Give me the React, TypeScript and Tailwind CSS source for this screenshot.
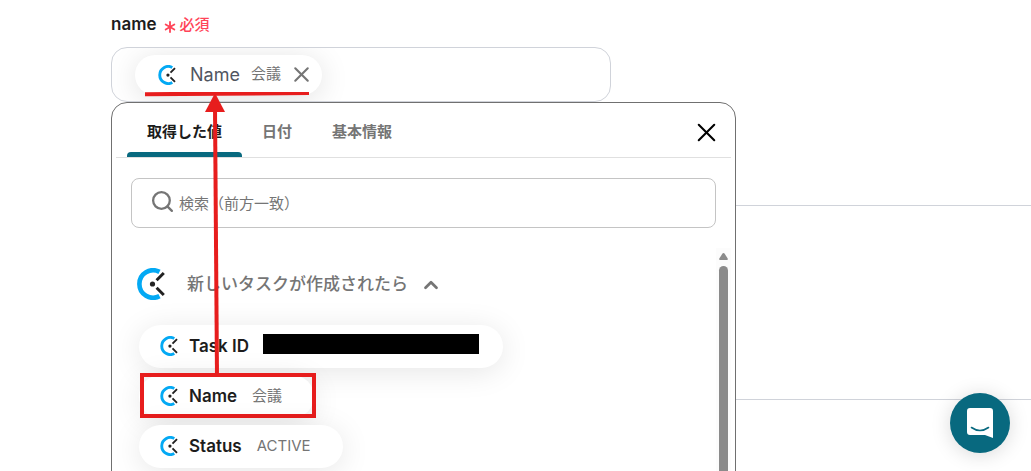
import { Asterisk, ChevronUp, Search, X } from 'lucide-react';

const tabs = [
  { label: '取得した値', active: true },
  { label: '日付', active: false },
  { label: '基本情報', active: false },
];

const values = [
  { name: 'Task ID', value: '', masked: true },
  { name: 'Name', value: '会議', highlighted: true },
  { name: 'Status', value: 'ACTIVE' },
];

function ClockLogo({ className }: { className: string }) {
  return (
    <svg viewBox="0 0 28 32" className={className} fill="none" aria-hidden="true">
      <path d="M22.5 3.9A13.7 13.7 0 1 0 22.5 28.1" stroke="#03a9f4" strokeWidth="4.6" />
      <circle cx="15.5" cy="16" r="2.6" fill="#222" />
      <path d="M19.6 12.2L26.8 5M19.6 19.8L26.8 27" stroke="#222" strokeWidth="3" />
    </svg>
  );
}

function Picker() {
  return (
    <div className="absolute top-full left-0 z-10 flex h-[480px] w-[625px] flex-col rounded-2xl border border-[#707070] bg-white">
      <div className="mx-1 flex h-[55px] items-stretch justify-between border-b border-[#e0e0e0] pr-[9px] pl-[11px]">
        <div className="flex" role="tablist">
          {tabs.map((tab) => (
            <button
              key={tab.label}
              role="tab"
              aria-selected={tab.active}
              className={
                tab.active
                  ? 'relative px-5 pt-1 text-[15px] font-bold text-[#1c1c1c]'
                  : 'px-5 pt-1 text-[15px] font-bold text-[#757575]'
              }
            >
              {tab.label}
              {tab.active && (
                <span className="absolute inset-x-0 bottom-0 h-[5px] rounded-t bg-[#08697f]" />
              )}
            </button>
          ))}
        </div>
        <button aria-label="閉じる" className="pt-1 text-black">
          <X className="size-[31px]" strokeWidth={1.6} />
        </button>
      </div>

      <label className="mx-[19px] mt-5 flex h-[50px] shrink-0 items-center gap-1 rounded-lg border border-[#c4c4c4] pl-[18px] text-[#757575]">
        <Search className="mb-1 size-[25px] shrink-0" strokeWidth={2.2} />
        <input
          type="text"
          aria-label="検索"
          placeholder="検索（前方一致）"
          className="w-full bg-transparent pt-[2px] text-[15px] outline-none placeholder:text-[#757575]"
        />
      </label>

      <div className="mr-1 mt-5 flex min-h-0 flex-1">
        <div className="flex-1 overflow-hidden pl-[25px]">
          <button className="mt-5 flex h-8 items-center text-[17px] font-medium text-[#757575]">
            <ClockLogo className="h-8 w-7" />
            <span className="ml-[22px] pt-px">新しいタスクが作成されたら</span>
            <ChevronUp className="mt-[2px] ml-3 size-[22px]" strokeWidth={3} />
          </button>
          <ul className="mt-[25px] ml-[2px] flex flex-col items-start gap-[7px]">
            {values.map((item) => (
              <li key={item.name} className="relative">
                <button className="flex h-[43px] items-center rounded-full bg-white pr-8 pl-[21px] shadow-[0_4px_30px_rgba(0,0,0,0.1)]">
                  <ClockLogo className="mb-[2px] h-5 w-[18px]" />
                  <span className="ml-[11px] text-[17px] font-semibold text-[#1c1c1c]">{item.name}</span>
                  {item.masked ? (
                    <span className="mr-[-8px] mb-[6px] ml-[14px] h-5 w-[216px] bg-black" />
                  ) : (
                    <span className="ml-[15px] text-[15px] text-[#757575]">{item.value}</span>
                  )}
                </button>
                {item.highlighted && (
                  <span className="absolute -top-[2px] left-px h-[45px] w-[176px] border-4 border-[#e71d1d]" />
                )}
              </li>
            ))}
          </ul>
        </div>
        <div className="flex w-[15px] flex-col items-center bg-[#fcfcfc] pt-[5px]">
          <svg viewBox="0 0 9 7" className="h-[7px] w-[9px]" fill="#8b8b8b" aria-hidden="true">
            <path d="M4.5 0Q5.2 0 5.7 .8L8.7 5.5Q9.2 7 8 7H1Q-.2 7 .3 5.5L3.3 .8Q3.8 0 4.5 0Z" />
          </svg>
          <span className="mt-[6px] w-[9px] flex-1 rounded-t-full bg-[#8b8b8b]" />
        </div>
      </div>
    </div>
  );
}

// Underline below the chip and the arrow coming up from the highlighted value
function Annotation() {
  return (
    <svg
      viewBox="0 0 176 284"
      className="pointer-events-none absolute top-[45px] left-[29px] z-20 h-[284px] w-[176px]"
      fill="none"
      aria-hidden="true"
    >
      <path d="M5 2.2L169 1" stroke="#e71d1d" strokeWidth="4" />
      <path d="M75 16L77 284" stroke="#e71d1d" strokeWidth="4" />
      <path d="M75 1L85 20H65Z" fill="#e71d1d" />
    </svg>
  );
}

export default function App() {
  return (
    <main className="relative h-screen overflow-hidden bg-white pl-[111px] font-['Inter','Noto_Sans_CJK_JP',sans-serif] text-[#1c1c1c]">
      <section className="h-[206px] border-b border-[#d0d3da] pt-[13px]">
        <div className="flex h-6 items-center">
          <span className="text-[17px] font-semibold">name</span>
          <Asterisk className="mt-1 ml-[3px] size-5 text-[#ff4458]" strokeWidth={2.2} />
          <span className="text-[15px] font-medium text-[#ff4458]">必須</span>
        </div>
        <div className="relative mt-[10px] w-[500px]">
          <div className="flex h-[55px] items-center overflow-hidden rounded-2xl border border-[#d0d3da] pl-[23px]">
            <div className="flex h-10 items-center rounded-full bg-white pr-2 pl-[23px] shadow-[0_4px_30px_rgba(0,0,0,0.12)]">
              <ClockLogo className="h-5 w-[18px]" />
              <span className="ml-[14px] text-[18px] text-[#50555f]">Name</span>
              <span className="ml-[11px] text-[15px] text-[#757575]">会議</span>
              <button aria-label="削除" className="ml-2 text-[#757575]">
                <X className="size-[25px]" strokeWidth={2} />
              </button>
            </div>
          </div>
          <Picker />
          <Annotation />
        </div>
      </section>
      <section className="h-[194px] border-b border-[#d0d3da]" />

      <button
        aria-label="チャットを開く"
        className="absolute right-[21px] bottom-[18px] flex size-[60px] items-center justify-center rounded-full bg-[#08697f] shadow-[0_2px_20px_rgba(0,0,0,0.15)]"
      >
        <svg viewBox="0 0 26 30" className="h-[30px] w-[26px]" fill="none" aria-hidden="true">
          <path d="M3 0H23Q26 0 26 3V30L18 27H3Q0 27 0 24V3Q0 0 3 0Z" fill="#fff" />
          <path d="M4.5 19.5Q13 25.5 21.5 19.5" stroke="#08697f" strokeWidth="1.6" strokeLinecap="round" />
        </svg>
      </button>
    </main>
  );
}
